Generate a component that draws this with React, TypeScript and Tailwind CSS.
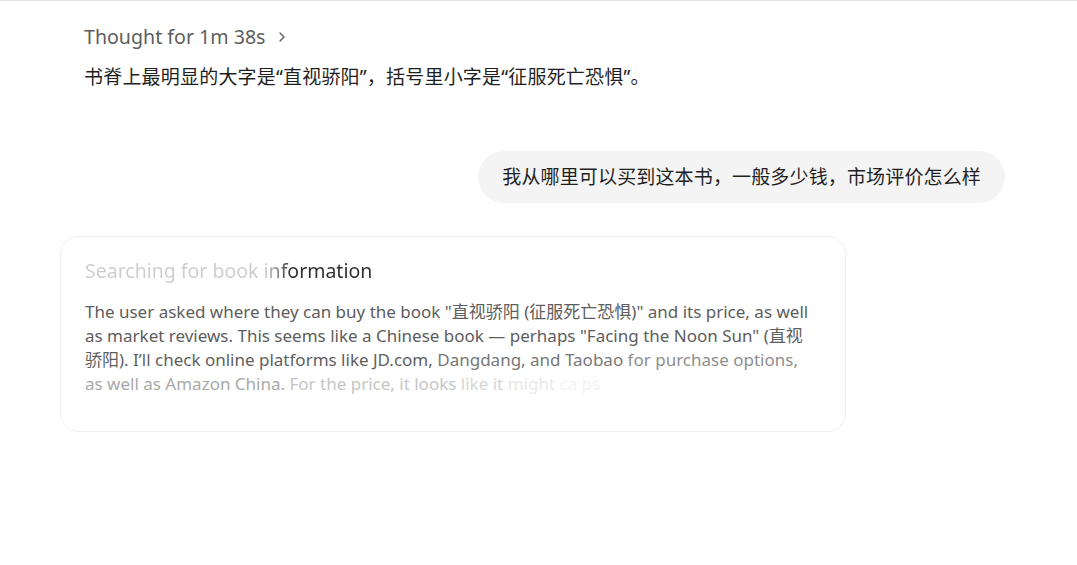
import { ChevronRight } from 'lucide-react';

const FONT = "font-['Noto_Sans','Noto_Sans_CJK_SC',sans-serif]";

function ThoughtBlock() {
  return (
    <div className="pl-6">
      <button className="flex items-center gap-2 text-[19.6px] leading-7 text-[#5d5d5d]">
        Thought for 1m 38s
        <ChevronRight size={16} strokeWidth={2} className="text-[#5d5d5d]" />
      </button>
      <p className="mt-3 text-[19px] leading-7 tracking-[0.2px] text-[#1f1f1f]">
        书脊上最明显的大字是“直视骄阳”，括号里小字是“征服死亡恐惧”。
      </p>
    </div>
  );
}

function UserBubble() {
  return (
    <div className="mt-[60px] flex justify-end">
      <div className="rounded-full bg-[#f4f4f4] px-6 py-3 text-[19px] leading-7 tracking-[0.15px] text-[#1f1f1f]">
        我从哪里可以买到这本书，一般多少钱，市场评价怎么样
      </div>
    </div>
  );
}

function SearchingCard() {
  return (
    <div className="mt-[33px] w-[786px] rounded-[18px] border border-[#eeeeee] px-6 pt-5 pb-[35px]">
      <div className="inline-block bg-[linear-gradient(90deg,#cdcdcd_0%,#cdcdcd_63%,#2d2d2d_72%,#2d2d2d_100%)] bg-clip-text text-[19.5px] leading-7 text-transparent">
        Searching for book information
      </div>
      <div className="mt-[15px] whitespace-nowrap text-[17px] leading-6 text-[#5d5d5d]">
        <div>The user asked where they can buy the book "直视骄阳 (征服死亡恐惧)" and its price, as well</div>
        <div>as market reviews. This seems like a Chinese book — perhaps "Facing the Noon Sun" (直视</div>
        <div>
          <span className="text-[#5f5f5f]">骄阳). I’ll check online platforms like JD.com, </span>
          <span className="text-[#777777]">Dangdang, and Taobao </span>
          <span className="text-[#8e8e8e]">for purchase options,</span>
        </div>
        <div>
          <span className="text-[#a9a9a9]">as well as Amazon China. </span>
          <span className="text-[#c6c6c6]">For the price, it looks </span>
          <span className="text-[#d6d6d6]">like it </span>
          <span className="text-[#e8e8e8]">might </span>
          <span className="text-[#f2f2f2]">ca ps</span>
        </div>
      </div>
    </div>
  );
}

export default function App() {
  return (
    <div className={`${FONT} h-[565px] w-full overflow-hidden border-t border-[#e3e3e3] bg-white`}>
      <div className="ml-[60px] w-[945px] pt-[22px]">
        <ThoughtBlock />
        <UserBubble />
        <SearchingCard />
      </div>
    </div>
  );
}
